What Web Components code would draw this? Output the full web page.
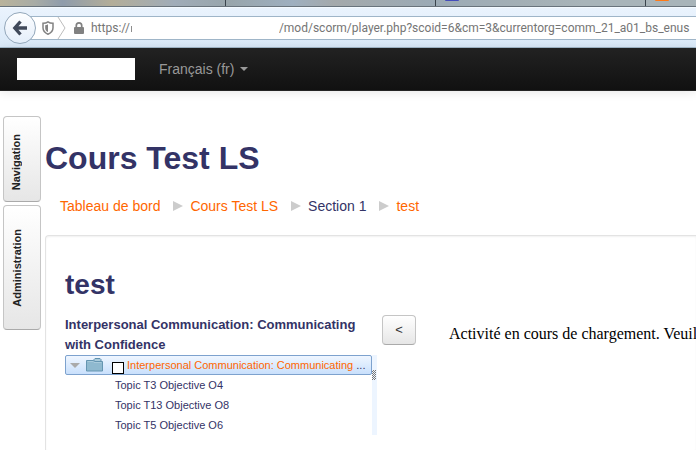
<!DOCTYPE html>
<html lang="fr">
<head>
<meta charset="utf-8">
<title>Cours Test LS : test</title>
<style>
html{height:100%}
body{margin:0;min-height:100%;overflow:hidden;background:#fff;color:#336;font:14px/20px "Liberation Sans",Arial,sans-serif}
</style>
</head>
<body>
<course-page></course-page>
<script>
const define = (name, html) => {
  const tpl = document.createElement('template');
  tpl.innerHTML = html;
  customElements.define(name, class extends HTMLElement {
    constructor() {
      super();
      this.attachShadow({ mode: 'open' }).append(tpl.content.cloneNode(true));
    }
  });
};

define('browser-tabs', `
<style>
:host{display:flex;height:6px;overflow:hidden;border-bottom:1px solid #68737c;
 background:linear-gradient(90deg,#b9b39b 0,#a8aca6 5%,#8f9cab 9%,#b3ad98 16%,#a0acb8 25%,#98a5ab 33%,#9eafbf 42%,#a4a9ab 48%,#9baab5 62%,#a3afb5 75%,#a8b4b9 84%,#a8b4b9 100%)}
i{box-sizing:border-box;border-right:1px solid #39434b}
.a{flex:226 1 0}.b,.c{flex:210 1 0}.d{flex:50 1 0;border:0}
b{display:block;width:14px;height:1px;margin-left:9px;border-radius:0 0 3px 3px;background:#444dbb}
.d b{background:#ff7a17}
</style><i class="a"></i><i class="b"></i><i class="c"><b></b></i><i class="d"><b></b></i>`);

define('browser-toolbar', `
<style>
:host{display:flex;align-items:center;box-sizing:border-box;height:41px;padding-left:4px;
 background:linear-gradient(#eaf3fd,#dae9f8);border-bottom:1px solid #a3b9ca;border-top:1px solid #f4faff}
.back{box-sizing:border-box;width:32px;height:32px;flex:none;padding:0;border:1px solid #93a7ba;border-radius:50%;
 background:linear-gradient(#fdfeff,#e4eefa);z-index:1;display:grid;place-items:center}
.field{flex:1;min-width:0;box-sizing:border-box;height:24px;margin-left:-6px;display:flex;align-items:center;
 background:#fff;border:solid #9fb5c8;border-width:1px 0;padding-left:12px;color:#757575;
 font:12px/20px Roboto,"Open Sans",sans-serif}
svg{display:block;flex:none}
.sep{margin-left:3px}.lock{margin-left:8px}
label{margin-left:7px;flex:none;white-space:nowrap}
.stub{width:1px;height:6px;margin:2px 0 0 1px;background:#8d8d8d}
input{flex:1;min-width:0;margin-left:147px;padding:0;border:0;background:none;color:inherit;font:inherit;outline:0}
</style>
<button class="back" type="button" aria-label="Précédent"><svg width="16" height="16" viewBox="0 0 16 16"><path d="M8.500 1.500L2.800 8l5.700 6.500M2.500 8H15" fill="none" stroke="#40495a" stroke-width="3.300"/></svg></button>
<div class="field">
<svg width="12" height="14" viewBox="0 0 12 14"><path d="M6 .9C4.500 2 3 2.300 1 2.300v4.500C1 10 3 12 6 13.200 9 12 11 10 11 6.800V2.300C9 2.300 7.500 2 6 .9z" fill="none" stroke="#838383" stroke-width="1.500"/><path d="M6 3.300C5 4 4.200 4.200 3.200 4.300v2.900c0 2 1.100 3 2.800 3.900z" fill="#838383"/></svg>
<svg class="sep" width="9" height="22" viewBox="0 0 9 22"><path d="M1 0l7 11-7 11" fill="none" stroke="#bcbcbc"/></svg>
<svg class="lock" width="10" height="12" viewBox="0 0 10 12"><path d="M2.300 6V3.600a2.700 2.700 0 0 1 5.400 0V6" fill="none" stroke="#818181" stroke-width="1.700"/><rect y="5" width="10" height="7" rx="1" fill="#818181"/></svg>
<label for="url">https://</label><span class="stub"></span>
<input id="url" type="text" value="/mod/scorm/player.php?scoid=6&amp;cm=3&amp;currentorg=comm_21_a01_bs_enus">
</div>`);

define('site-navbar', `
<style>
:host{display:flex;align-items:center;box-sizing:border-box;height:43px;padding-left:17px;
 background:linear-gradient(#222,#111);border-bottom:1px solid #252525;box-shadow:0 1px 10px rgba(0,0,0,.1)}
.brand{width:118px;height:22px;background:#fff}
button{margin-left:24px;padding:0;border:0;background:none;color:#999;font:inherit;display:flex;align-items:center;gap:6px}
i{border:4px solid transparent;border-top-color:#999;border-bottom:0}
</style>
<div class="brand"></div><button type="button" aria-haspopup="true">Français (fr)<i></i></button>`);

define('dock-tab', `
<style>
:host{display:block}
button{display:flex;align-items:center;box-sizing:border-box;width:38px;margin:0;padding:var(--pad);
 border:1px solid #c5c5c5;border-bottom-color:#aaa;border-radius:4px;background:linear-gradient(#fff,#e6e6e6);
 color:#222;font:bold 11px/13px "Liberation Sans",Arial,sans-serif}
span{writing-mode:vertical-rl;transform:rotate(180deg);white-space:nowrap}
</style><button type="button"><span><slot></slot></span></button>`);

define('bread-crumbs', `
<style>
:host{display:block}
ol{list-style:none;display:flex;margin:0;padding:0}
li{white-space:nowrap;display:flex;align-items:center}
li+li::before{content:"";margin:0 7px 0 13px;border:5px solid transparent;border-left:10px solid #ccc;border-right:0}
a{color:#f60;text-decoration:none}
</style>
<ol><li><a href="#">Tableau de bord</a></li><li><a href="#">Cours Test LS</a></li><li>Section 1</li><li><a href="#">test</a></li></ol>`);

define('toc-tree', `
<style>
:host{display:flex;font-size:11px;line-height:20px;height:80px}
ul{list-style:none;margin:0;padding:0;flex:1;min-width:0}
.sel{box-sizing:border-box;height:20px;display:flex;align-items:center;padding:0 0 0 4px;
 border:1px solid #7da2ce;border-radius:2px;background:linear-gradient(#eff6ff,#c9e0fc)}
.arrow{border:5px solid transparent;border-top-color:#aaa;border-bottom:0;flex:none}
svg{flex:none;margin-left:6px}
input{appearance:none;box-sizing:border-box;width:12px;height:12px;margin:5px 3px 0 9px;border:1px solid #000;background:#fff;flex:none}
label{flex:1;min-width:0;white-space:nowrap}
a{color:#f60;text-decoration:none}
.item{padding-left:50px}
.resize{flex:none;width:5px;background:#edf5ff;padding-top:15px;box-sizing:border-box}
.grip{width:4px;height:10px;background:conic-gradient(#777 25%,#edf5ff 0 50%,#777 0 75%,#edf5ff 0) 0 0/2px 2px}
</style>
<ul>
<li class="sel"><span class="arrow"></span>
<svg width="17" height="14" viewBox="0 0 17 14"><path d="M8 3V1.500l1-1h5l1 1V3" fill="#a9cbdc" stroke="#5f91ae"/><path d="M.5 2.500h7l1 1h8v9.500H.5z" fill="#8fb9cf" stroke="#6595b1"/><path d="M1.500 3.500H7l1 1h7.500" fill="none" stroke="#a9cbdc"/></svg>
<input id="sco" type="checkbox"><label for="sco"><a href="#">Interpersonal Communication: Communicating</a> ...</label></li>
<li class="item">Topic T3 Objective O4</li><li class="item">Topic T13 Objective O8</li><li class="item">Topic T5 Objective O6</li>
</ul>
<div class="resize"><div class="grip"></div></div>`);

define('scorm-player', `
<style>
:host{display:block;border:1px solid #e3e3e3;border-width:1px 0 0 1px;border-radius:4px 0 0 0;padding:29px 0 15px 19px;
 box-shadow:inset 0 1px 2px rgba(0,0,0,.06)}
h2{margin:0 0 10px;font-size:28px;line-height:40px}
.row{display:flex;align-items:flex-start}
.toc{flex:none;width:312px}
h3{margin:0;font-size:13px;line-height:20px;padding-right:8px}
.toggle{box-sizing:border-box;width:34px;height:30px;margin-left:5px;padding:0;flex:none;border:1px solid #c5c5c5;border-bottom-color:#aaa;border-radius:4px;
 background:linear-gradient(#fff,#e6e6e6);color:#333;font:13px/20px "Liberation Sans",Arial,sans-serif}
p{margin:8px 0 0 33px;flex:1;min-width:0;white-space:nowrap;color:#000;font:16px/22px "Liberation Serif","Times New Roman",serif}
</style>
<h2>test</h2>
<div class="row"><div class="toc"><h3>Interpersonal Communication: Communicating with Confidence</h3><toc-tree></toc-tree></div>
<button class="toggle" type="button">&lt;</button><p>Activité en cours de chargement. Veuil</p></div>`);

define('course-page', `
<style>
:host{display:block}
.body{display:flex;align-items:flex-start;gap:4px;padding:25px 0 0 3px}
nav{flex:none;display:grid;gap:3px}
.admin{--pad:23px 0 22px 7px}.nav{--pad:17px 0 11px 6px}
main{flex:1;min-width:0}
h1{margin:22px 0 0;font-size:32px;line-height:40px}
bread-crumbs{padding:18px 15px 19px}
</style>
<browser-tabs></browser-tabs><browser-toolbar></browser-toolbar><site-navbar></site-navbar>
<div class="body"><nav><dock-tab class="nav">Navigation</dock-tab><dock-tab class="admin">Administration</dock-tab></nav>
<main><h1>Cours Test LS</h1><bread-crumbs></bread-crumbs><scorm-player></scorm-player></main></div>`);
</script>
</body>
</html>
